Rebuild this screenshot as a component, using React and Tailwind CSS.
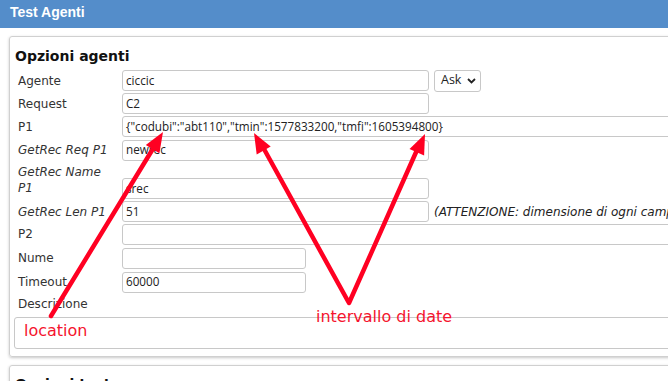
import React from "react";

const LBL = "w-[108px] shrink-0 pl-[4px] font-['DejaVu_Sans',sans-serif] text-[12px] leading-[16px] text-[#333]";
const INP = "h-[21px] shrink-0 border border-[#c8c8c8] rounded-[3px] bg-white pl-[3px] flex items-center font-['Open_Sans',sans-serif] text-[11.7px] text-[#222] whitespace-nowrap overflow-hidden";

function Row({ hc, label, italic, children, labelCls }) {
  return (
    <div className={"flex items-center " + hc}>
      <div className={LBL + (italic ? " italic" : "") + (labelCls ? " " + labelCls : "")}>{label}</div>
      {children}
    </div>
  );
}

export default function App() {
  return (
    <div className="relative w-[668px] h-[381px] overflow-hidden bg-white">
      <div className="h-[28px] bg-[#548dca] pl-[10px] pt-[2px] font-['Liberation_Sans',sans-serif] font-bold text-[14px] leading-[20px] text-white">
        Test Agenti
      </div>
      <div className="pl-[9px] pt-[8px] w-[900px]">
        <div className="border border-[#d0d0d0] rounded-[3px] shadow-[0_1px_3px_rgba(0,0,0,0.22)] px-[4px] pt-[10px] pb-[7px]">
          <div className="pl-[1px] font-['DejaVu_Sans',sans-serif] font-bold text-[14px] leading-[18px] text-[#111]">
            Opzioni agenti
          </div>
          <div className="mt-[4px] flex flex-col">
            <Row hc="h-[23px]" label="Agente">
              <div className={INP + " w-[307px]"}>ciccic</div>
              <div className="ml-[5px] w-[47px] h-[22px] border border-[#c8c8c8] rounded-[3px] bg-white flex items-center pl-[6px] gap-[6px] font-['Open_Sans',sans-serif] text-[12.5px] text-[#222]">
                <span>Ask</span>
                <svg width="9" height="6" viewBox="0 0 9 6">
                  <path d="M1 1 L4.5 4.5 L8 1" fill="none" stroke="#222" strokeWidth="1.8" />
                </svg>
              </div>
            </Row>
            <Row hc="h-[23px]" label="Request">
              <div className={INP + " w-[307px]"}>C2</div>
            </Row>
            <Row hc="h-[23px]" label="P1">
              <div className={INP + " w-[700px]"}>{'{"codubi":"abt110","tmin":1577833200,"tmfi":1605394800}'}</div>
            </Row>
            <Row hc="h-[24px]" label="GetRec Req P1" italic>
              <div className={INP + " w-[307px]"}>newrec</div>
            </Row>
            <div className="flex h-[38px]">
              <div className={LBL + " italic pt-[2px]"}>
                GetRec Name
                <br />
                P1
              </div>
              <div className="flex flex-col justify-end pb-[1px]">
                <div className={INP + " w-[307px]"}>srec</div>
              </div>
            </div>
            <Row hc="h-[23px]" label="GetRec Len P1" italic>
              <div className={INP + " w-[307px]"}>51</div>
              <div className="ml-[5px] whitespace-nowrap italic font-['DejaVu_Sans',sans-serif] text-[12px] text-[#222]">
                (ATTENZIONE: dimensione di ogni campo del record)
              </div>
            </Row>
            <Row hc="h-[22px]" label="P2">
              <div className={INP + " w-[700px]"}></div>
            </Row>
            <Row hc="h-[26px]" label="Nume">
              <div className={INP + " w-[184px]"}></div>
            </Row>
            <Row hc="h-[22px]" label="Timeout">
              <div className={INP + " w-[184px]"}>60000</div>
            </Row>
            <Row hc="h-[22px]" label="Descrizione" />
          </div>
          <div className="mt-[2px] h-[32px] border border-[#c8c8c8] rounded-[3px] bg-white"></div>
        </div>
        <div className="mt-[8px] border border-[#d0d0d0] rounded-[3px] shadow-[0_1px_3px_rgba(0,0,0,0.22)] px-[4px] pt-[9px] h-[60px]">
          <div className="pl-[1px] font-['DejaVu_Sans',sans-serif] font-bold text-[14px] leading-[18px] text-[#111]">
            Opzioni test
          </div>
        </div>
      </div>

      <svg className="absolute left-0 top-0 pointer-events-none" width="668" height="381" viewBox="0 0 668 381">
        <g stroke="#ff0022" strokeWidth="4.5" fill="none" strokeLinecap="round" strokeLinejoin="round">
          <line x1="51" y1="316" x2="154" y2="147" />
          <polyline points="264,149 349,303 417,150" />
        </g>
        <g fill="#ff0022">
          <polygon points="163,132 159.4,153.3 145.8,144.9" />
          <polygon points="254,133 270.7,146.6 256.7,154.4" />
          <polygon points="425,134 424.1,155.6 409.5,149" />
        </g>
      </svg>
      <div className="absolute left-[24px] top-[323px] font-['DejaVu_Sans',sans-serif] text-[16px] leading-[16px] text-[#f5142e] whitespace-nowrap">
        location
      </div>
      <div className="absolute left-[316px] top-[309px] font-['DejaVu_Sans',sans-serif] text-[16px] leading-[16px] text-[#f5142e] whitespace-nowrap">
        intervallo di date
      </div>
    </div>
  );
}
